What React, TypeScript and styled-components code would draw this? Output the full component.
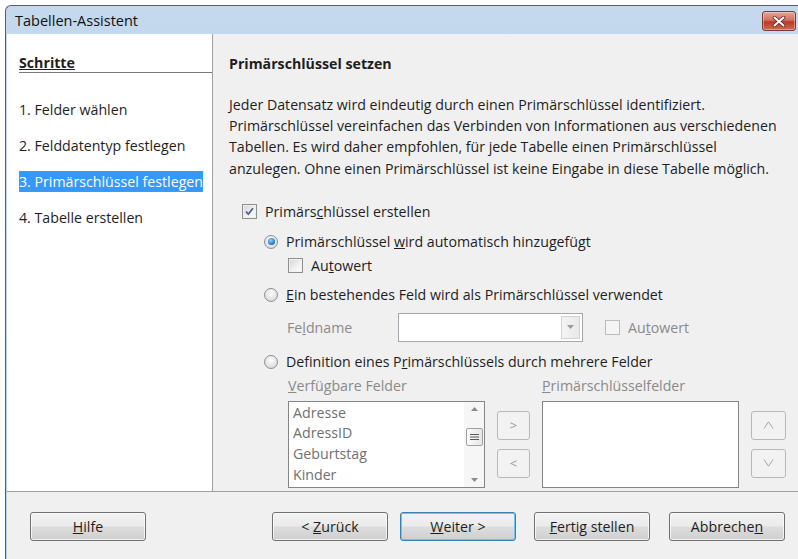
import React from 'react'
import styled, { createGlobalStyle } from 'styled-components'

const GlobalStyle = createGlobalStyle`
  html, body {
    margin: 0;
    padding: 0;
    background: #ffffff;
  }
  body {
    font-family: 'Open Sans', 'Noto Sans', 'Liberation Sans', sans-serif;
    font-size: 14.2px;
    color: #1e1e1e;
  }
`

const Page = styled.div`
  width: 798px;
  height: 559px;
  padding: 5px 0 0 5px;
  box-sizing: border-box;
  overflow: hidden;
`

const Frame = styled.div`
  width: 793px;
  height: 554px;
  display: flex;
  flex-direction: column;
  border: 1px solid #5a5f66;
  border-right: none;
  border-bottom: none;
  border-radius: 6px 0 0 0;
  background: linear-gradient(#c4d8ee, #b6cfea);
  overflow: hidden;
`

const TitleBar = styled.div`
  height: 28px;
  flex: none;
  display: flex;
  align-items: center;
  justify-content: space-between;
  padding: 0 3px 0 9px;
  color: #111;
  font-size: 14.5px;
`

const CloseButton = styled.div`
  width: 32px;
  height: 18px;
  margin-top: 2px;
  display: flex;
  align-items: center;
  justify-content: center;
  border: 1px solid #7a3a34;
  border-radius: 3px;
  background: linear-gradient(#e8a595 0%, #d2705f 45%, #b83a28 55%, #d06a50 100%);
  box-shadow: inset 0 0 0 1px rgba(255, 255, 255, 0.35);
`

const Body = styled.div`
  flex: 1;
  display: flex;
  flex-direction: column;
  margin-left: 1px;
  background: #f0f0f0;
`

const Main = styled.div`
  height: 457px;
  display: flex;
  border-bottom: 1px solid #a0a0a0;
`

const Sidebar = styled.div`
  width: 206px;
  flex: none;
  padding-left: 12px;
  box-sizing: border-box;
  background: #ffffff;
  border-right: 1px solid #a0a0a0;
`

const StepsHeader = styled.div`
  margin-top: 21px;
  line-height: 16px;
  padding-bottom: 1px;
  font-weight: 700;
  text-decoration: underline;
  border-bottom: 1px solid #7a7a7a;
`

const StepList = styled.div`
  display: flex;
  flex-direction: column;
  gap: 15px;
  margin-top: 26px;
`

const Step = styled.div<{ $active?: boolean }>`
  align-self: flex-start;
  line-height: 21px;
  white-space: nowrap;
  color: ${(p) => (p.$active ? '#ffffff' : '#1e1e1e')};
  background: ${(p) => (p.$active ? '#3399ff' : 'transparent')};
  outline: ${(p) => (p.$active ? '1px dotted #c87a3a' : 'none')};
  outline-offset: -1px;
`

const Content = styled.div`
  flex: 1;
  padding-left: 16px;
  display: flex;
  flex-direction: column;
`

const PageTitle = styled.div`
  margin-top: 20px;
  line-height: 20px;
  font-weight: 700;
`

const Intro = styled.p`
  margin: 20px 0 0;
  line-height: 21.2px;
  white-space: nowrap;
`

const Row = styled.div<{ $indent: number; $gap: number; $top: number }>`
  display: flex;
  align-items: center;
  height: 20px;
  margin-left: ${(p) => p.$indent}px;
  margin-top: ${(p) => p.$top}px;
  gap: ${(p) => p.$gap}px;
`

const Label = styled.span<{ $disabled?: boolean; $width?: number }>`
  color: ${(p) => (p.$disabled ? '#8a8a8a' : '#1e1e1e')};
  white-space: nowrap;
  width: ${(p) => (p.$width ? `${p.$width}px` : 'auto')};
  flex: none;
`

const Box = styled.span<{ $disabled?: boolean }>`
  width: 13px;
  height: 13px;
  flex: none;
  display: flex;
  align-items: center;
  justify-content: center;
  border: 1px solid ${(p) => (p.$disabled ? '#bcbcbc' : '#8e8f8f')};
  background: ${(p) =>
    p.$disabled ? '#f4f4f4' : 'linear-gradient(135deg, #d4d4d4, #f2f2f2 60%, #ffffff)'};
  box-shadow: inset 0 0 0 1px ${(p) => (p.$disabled ? '#f4f4f4' : '#f0f0f0')};
`

const Radio = styled.span<{ $checked?: boolean }>`
  width: 12px;
  height: 12px;
  flex: none;
  display: flex;
  align-items: center;
  justify-content: center;
  border-radius: 50%;
  border: 1px solid #8e8f8f;
  background: radial-gradient(circle at 50% 35%, #ffffff, #cfcfcf);

  &::after {
    content: '';
    display: ${(p) => (p.$checked ? 'block' : 'none')};
    width: 7px;
    height: 7px;
    border-radius: 50%;
    background: radial-gradient(circle at 40% 35%, #8fd0ff, #1d6fc4 70%);
  }
`

const FieldRow = styled.div`
  display: flex;
  align-items: center;
  margin: 8px 0 0 58px;
  height: 29px;
`

const Combo = styled.div`
  width: 185px;
  height: 29px;
  box-sizing: border-box;
  margin-right: 22px;
  display: flex;
  justify-content: flex-end;
  padding: 2px;
  border: 1px solid #a5a8ad;
  background: #ffffff;
`

const ComboArrow = styled.div`
  width: 17px;
  display: flex;
  align-items: center;
  justify-content: center;
  border: 1px solid #d3d3d3;
  background: linear-gradient(90deg, #f4f4f4, #e8e8e8);
`

const Lists = styled.div`
  display: grid;
  grid-template-columns: 197px 33px 197px 35px;
  column-gap: 12px;
  row-gap: 6px;
  margin: 5px 0 0 59px;
`

const ListCaption = styled.div`
  line-height: 18px;
  color: #8a8a8a;
  white-space: nowrap;
`

const ListBox = styled.div`
  height: 87px;
  box-sizing: border-box;
  display: flex;
  border: 1px solid #858585;
  background: #ffffff;
`

const ListItems = styled.div`
  flex: 1;
  padding: 1px 0 0 4px;
  line-height: 20.6px;
  color: #707070;
`

const ScrollBar = styled.div`
  width: 20px;
  display: flex;
  flex-direction: column;
  align-items: center;
  justify-content: space-between;
  padding: 5px 0;
  background: #f6f6f6;
`

const Thumb = styled.div`
  width: 15px;
  height: 16px;
  display: flex;
  align-items: center;
  justify-content: center;
  border: 1px solid #a0a0a0;
  border-radius: 2px;
  background: linear-gradient(90deg, #fafafa, #e6e6e6);
  margin-top: -14px;
`

const MoveButtons = styled.div`
  display: flex;
  flex-direction: column;
  gap: 9px;
  padding-top: 10px;
`

const SmallButton = styled.div`
  height: 29px;
  box-sizing: border-box;
  display: flex;
  align-items: center;
  justify-content: center;
  border: 1px solid #b8b8b8;
  border-radius: 3px;
  background: #f2f2f2;
  color: #9a9a9a;
  font-size: 13px;
`

const Footer = styled.div`
  flex: 1;
  display: flex;
  align-items: flex-start;
  padding: 20px 0 0 23px;
`

const Button = styled.div<{ $focused?: boolean; $gap: number }>`
  width: 116px;
  height: 29px;
  box-sizing: border-box;
  margin-left: ${(p) => p.$gap}px;
  display: flex;
  align-items: center;
  justify-content: center;
  border: 1px solid ${(p) => (p.$focused ? '#3c7fb1' : '#707070')};
  border-radius: 3px;
  background: linear-gradient(#f2f2f2 0%, #ebebeb 48%, #dddddd 52%, #cfcfcf 100%);
  box-shadow: inset 0 0 0 1px ${(p) => (p.$focused ? '#6ec3f0' : 'rgba(255,255,255,0.7)')};
  color: #1e1e1e;
`

const CheckMark = () => (
  <svg width="11" height="11" viewBox="0 0 11 11">
    <path d="M2 5.5 L4.3 8.2 L9 2.2" fill="none" stroke="#4b5f96" strokeWidth="1.8" />
  </svg>
)

const CloseGlyph = () => (
  <svg width="14" height="11" viewBox="0 0 14 11">
    <path d="M2.5 1.5 L11.5 9.5 M11.5 1.5 L2.5 9.5" stroke="#5a2620" strokeWidth="3.6" strokeLinecap="round" />
    <path d="M2.5 1.5 L11.5 9.5 M11.5 1.5 L2.5 9.5" stroke="#ffffff" strokeWidth="2" strokeLinecap="round" />
  </svg>
)

const Triangle = ({ up, color = '#8a8a8a' }: { up?: boolean; color?: string }) => (
  <svg width="7" height="4" viewBox="0 0 7 4">
    <path d={up ? 'M0 4 L3.5 0 L7 4 Z' : 'M0 0 L7 0 L3.5 4 Z'} fill={color} />
  </svg>
)

const Grip = () => (
  <svg width="9" height="8" viewBox="0 0 9 8">
    <path d="M0 1.5 H9 M0 4 H9 M0 6.5 H9" stroke="#5a5a5a" strokeWidth="1" />
  </svg>
)

const Chevron = ({ up }: { up?: boolean }) => (
  <svg width="11" height="8" viewBox="0 0 11 8">
    <path d={up ? 'M1 7.5 L5.5 0.8 L10 7.5' : 'M1 0.5 L5.5 7.2 L10 0.5'} fill="none" stroke="#a4a4a4" strokeWidth="1" />
  </svg>
)

const steps = ['1. Felder wählen', '2. Felddatentyp festlegen', '3. Primärschlüssel festlegen', '4. Tabelle erstellen']
const fields = ['Adresse', 'AdressID', 'Geburtstag', 'Kinder']

export default function App() {
  return (
    <Page>
      <GlobalStyle />
      <Frame>
        <TitleBar>
          <span>Tabellen-Assistent</span>
          <CloseButton>
            <CloseGlyph />
          </CloseButton>
        </TitleBar>
        <Body>
          <Main>
            <Sidebar>
              <StepsHeader>Schritte</StepsHeader>
              <StepList>
                {steps.map((s, i) => (
                  <Step key={s} $active={i === 2}>
                    {s}
                  </Step>
                ))}
              </StepList>
            </Sidebar>
            <Content>
              <PageTitle>Primärschlüssel setzen</PageTitle>
              <Intro>
                Jeder Datensatz wird eindeutig durch einen Primärschlüssel identifiziert.
                <br />
                Primärschlüssel vereinfachen das Verbinden von Informationen aus verschiedenen
                <br />
                Tabellen. Es wird daher empfohlen, für jede Tabelle einen Primärschlüssel
                <br />
                anzulegen. Ohne einen Primärschlüssel ist keine Eingabe in diese Tabelle möglich.
              </Intro>

              <Row $indent={13} $gap={8} $top={23}>
                <Box>
                  <CheckMark />
                </Box>
                <Label>
                  Primärs<u>c</u>hlüssel erstellen
                </Label>
              </Row>

              <Row $indent={35} $gap={8} $top={10}>
                <Radio $checked />
                <Label>
                  Primärschlüssel <u>w</u>ird automatisch hinzugefügt
                </Label>
              </Row>

              <Row $indent={59} $gap={8} $top={4}>
                <Box />
                <Label>
                  Au<u>t</u>owert
                </Label>
              </Row>

              <Row $indent={35} $gap={8} $top={9}>
                <Radio />
                <Label>
                  <u>E</u>in bestehendes Feld wird als Primärschlüssel verwendet
                </Label>
              </Row>

              <FieldRow>
                <Label $disabled $width={111}>
                  Fe<u>l</u>dname
                </Label>
                <Combo>
                  <ComboArrow>
                    <Triangle color="#9a9a9a" />
                  </ComboArrow>
                </Combo>
                <Row $indent={0} $gap={8} $top={0}>
                  <Box $disabled />
                  <Label $disabled>
                    Au<u>t</u>owert
                  </Label>
                </Row>
              </FieldRow>

              <Row $indent={35} $gap={8} $top={10}>
                <Radio />
                <Label>
                  Definition eines P<u>r</u>imärschlüssels durch mehrere Felder
                </Label>
              </Row>

              <Lists>
                <ListCaption>
                  <u>V</u>erfügbare Felder
                </ListCaption>
                <div />
                <ListCaption>
                  <u>P</u>rimärschlüsselfelder
                </ListCaption>
                <div />

                <ListBox>
                  <ListItems>
                    {fields.map((f) => (
                      <div key={f}>{f}</div>
                    ))}
                  </ListItems>
                  <ScrollBar>
                    <Triangle up />
                    <Thumb>
                      <Grip />
                    </Thumb>
                    <Triangle />
                  </ScrollBar>
                </ListBox>
                <MoveButtons>
                  <SmallButton>&gt;</SmallButton>
                  <SmallButton>&lt;</SmallButton>
                </MoveButtons>
                <ListBox />
                <MoveButtons>
                  <SmallButton>
                    <Chevron up />
                  </SmallButton>
                  <SmallButton>
                    <Chevron />
                  </SmallButton>
                </MoveButtons>
              </Lists>
            </Content>
          </Main>
          <Footer>
            <Button $gap={0}>
              <u>H</u>ilfe
            </Button>
            <Button $gap={126}>
              &lt;&nbsp;<u>Z</u>urück
            </Button>
            <Button $gap={12} $focused>
              <u>W</u>eiter&nbsp;&gt;
            </Button>
            <Button $gap={18}>
              <u>F</u>ertig stellen
            </Button>
            <Button $gap={19}>
              Abbreche<u>n</u>
            </Button>
          </Footer>
        </Body>
      </Frame>
    </Page>
  )
}
